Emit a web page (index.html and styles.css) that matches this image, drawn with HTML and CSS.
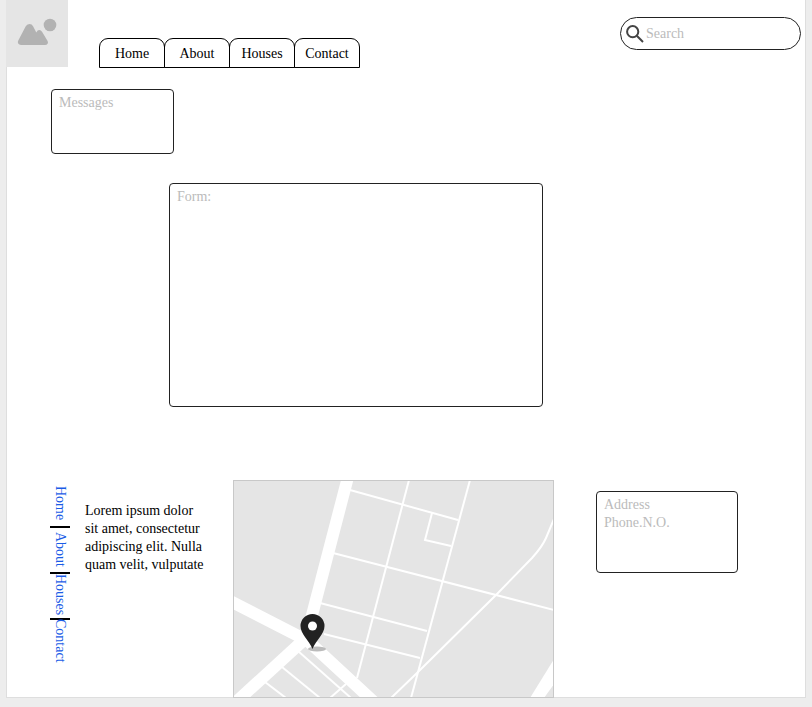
FILE: index.html
```html
<!DOCTYPE html>
<html lang="en">
<head>
<meta charset="utf-8">
<meta name="viewport" content="width=device-width, initial-scale=1">
<title>Houses</title>
<link rel="stylesheet" href="styles.css">
</head>
<body>
<div class="sheet">
  <header class="header">
    <svg class="logo" viewBox="0 0 62 67" role="img" aria-label="Logo">
      <path d="M12.3 40.5 L19.6 26.6 Q20.8 24 23.4 24 Q26 24 27.2 26.4 L30.3 32.4 Q31.5 30 33.2 30 Q35 30 36.2 32 L41.6 41 Q42.4 42.6 41.6 43.8 Q40.8 45 39 45 H15 Q13 45 12.2 43.6 Q11.4 42.2 12.3 40.5Z"/>
      <circle cx="44" cy="25" r="6.3"/>
    </svg>
    <nav class="tabs" aria-label="Main">
      <a href="#home">Home</a>
      <a href="#about">About</a>
      <a href="#houses">Houses</a>
      <a href="#contact">Contact</a>
    </nav>
    <label class="search">
      <svg class="search-icon" viewBox="0 0 18 18" aria-hidden="true">
        <circle cx="6.7" cy="6.7" r="5.6"/>
        <path d="M10.8 10.8 L17 17"/>
      </svg>
      <input type="search" placeholder="Search" aria-label="Search">
    </label>
  </header>
  <main class="main">
    <textarea class="box messages" placeholder="Messages" aria-label="Messages"></textarea>
    <textarea class="box form" placeholder="Form:" aria-label="Form"></textarea>
  </main>
  <footer class="footer">
    <nav class="side-nav" aria-label="Footer">
      <a href="#home">Home</a>
      <a href="#about">About</a>
      <a href="#houses">Houses</a>
      <a href="#contact">Contact</a>
    </nav>
    <p class="blurb">Lorem ipsum dolor sit amet, consectetur adipiscing elit. Nulla quam velit, vulputate</p>
    <svg class="map" viewBox="0 0 319 216" role="img" aria-label="Map">
      <g class="road wide">
        <path d="M114 -4 L77 138 L70 158"/>
        <path d="M-4 120 L74 160 L140 221"/>
        <path d="M72 157 L2 221"/>
      </g>
      <path class="block" d="M320 178 V203 L310 217 H296Z"/>
      <g class="road">
        <path d="M116 9 L224 39"/>
        <path d="M99 72 L320 129"/>
        <path d="M86 122 L193 150"/>
        <path d="M90 153 L186 177"/>
        <path d="M175 -1 L123 197"/>
        <path d="M236 -1 L177 217"/>
        <path d="M198 32 L191 59 L217 65"/>
        <path d="M156 218 L183 192 L262 114 L298 77 Q308 66 312 57 L320 38"/>
        <path d="M64 170 L117 217"/>
        <path d="M48 186 L86 217"/>
        <path d="M31 201 L52 217"/>
        <path d="M112 203 L96 217"/>
      </g>
      <ellipse class="pin-shadow" cx="83" cy="168" rx="9" ry="2.5"/>
      <path class="pin" d="M78.5 168 C75 159 66.5 153 66.5 145 A12 12 0 0 1 90.5 145 C90.5 153 82 159 78.5 168Z"/>
      <circle class="block" cx="78.5" cy="145" r="4.5"/>
    </svg>
    <textarea class="box address" placeholder="Address&#10;Phone.N.O." aria-label="Address and phone number"></textarea>
  </footer>
</div>
</body>
</html>
```
FILE: styles.css
```css
* {
  box-sizing: border-box;
}

body {
  margin: 0;
  padding: 0 6px 9px;
  background: #ededed;
  color: #000;
  font: 14px/18px "Liberation Serif", serif;
}

.sheet {
  border: 1px solid #dedede;
  border-top: 0;
  background: #fff;
}

.header {
  display: flex;
  align-items: flex-start;
}

.logo {
  width: 62px;
  height: 67px;
  margin-left: -1px;
  background: #e5e5e5;
  fill: #b2b2b2;
}

.tabs {
  display: flex;
  margin: 38px auto 0 31px;
}

.tabs a {
  width: 66px;
  height: 30px;
  border: 1px solid #000;
  border-radius: 9px 9px 0 0;
  color: #000;
  line-height: 30px;
  text-align: center;
  text-decoration: none;
}

.tabs a + a {
  margin-left: -1px;
}

.search {
  display: flex;
  align-items: center;
  gap: 2px;
  width: 181px;
  height: 33px;
  margin: 17px 4px 0 0;
  padding: 0 5px;
  border: 1px solid #222;
  border-radius: 17px;
}

.search-icon {
  flex: none;
  width: 18px;
  height: 18px;
  fill: none;
  stroke: #444;
  stroke-width: 2;
}

.search input {
  width: 100%;
  padding: 0;
  border: 0;
  outline: 0;
  background: none;
  font: inherit;
}

::placeholder {
  color: #bbb;
  opacity: 1;
}

.box {
  display: block;
  padding: 4px 7px;
  border: 1px solid #222;
  border-radius: 4px;
  background: #fff;
  font: inherit;
  resize: none;
}

.main {
  padding: 21px 44px 0;
}

.messages {
  width: 123px;
  height: 65px;
}

.form {
  width: 374px;
  height: 224px;
  margin: 29px 0 0 118px;
}

.footer {
  display: flex;
  align-items: flex-start;
  margin-top: 73px;
  padding-left: 43px;
}

.side-nav {
  display: flex;
  flex-direction: column;
  width: 20px;
}

.side-nav a {
  height: 46px;
  color: #1a5ce6;
  line-height: 20px;
  text-align: center;
  text-decoration: none;
  white-space: nowrap;
  writing-mode: vertical-rl;
}

.side-nav a + a {
  box-shadow: inset 0 2px #000;
}

.blurb {
  width: 124px;
  margin: 22px 24px 0 15px;
}

.map {
  width: 321px;
  height: 218px;
  margin-bottom: -1px;
  border: 1px solid #c8c8c8;
  background: #e5e5e5;
}

.road {
  fill: none;
  stroke: #fff;
  stroke-width: 2;
}

.wide {
  stroke-width: 12;
}

.block {
  fill: #fff;
}

.pin {
  fill: #222;
}

.pin-shadow {
  fill: #bbb;
}

.address {
  width: 142px;
  height: 82px;
  margin: 11px 67px 0 auto;
}
```
